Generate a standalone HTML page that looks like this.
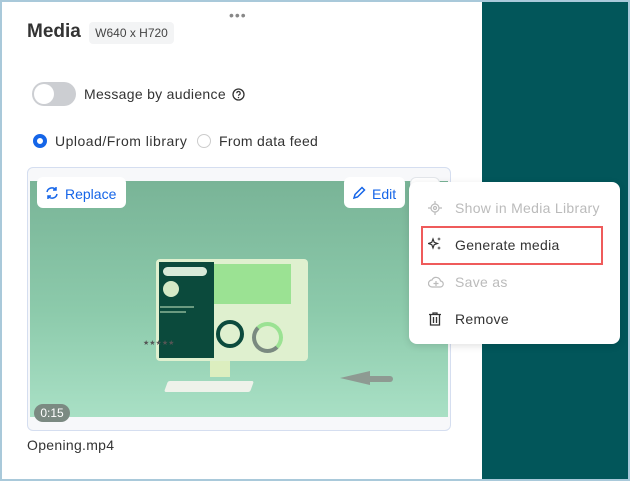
<!DOCTYPE html>
<html><head><meta charset="utf-8"><style>
*{box-sizing:border-box;margin:0;padding:0}
body{width:630px;height:481px;overflow:hidden;font-family:"Liberation Sans",sans-serif;background:#fff;position:relative}
.frame{position:absolute;inset:0;border:2px solid #a9c9da}
.teal{position:absolute;left:482px;top:2px;right:2px;bottom:2px;background:#02565a}
.abs{position:absolute}
.t{color:#333;font-size:14px;letter-spacing:.3px}
</style></head><body>
<div class="teal"></div>
<div class="abs" style="left:229px;top:10px;color:#888;font-size:14px;letter-spacing:1px;line-height:10px">•••</div>
<div class="abs" style="left:27px;top:21px;font-size:19px;font-weight:bold;color:#333">Media</div>
<div class="abs" style="left:89px;top:22px;width:85px;height:22px;background:#f3f4f5;border-radius:4px;font-size:12px;color:#444;line-height:22px;text-align:center">W640 x H720</div>
<div class="abs" style="left:32px;top:82px;width:44px;height:24px;border-radius:12px;background:#ccced2"></div>
<div class="abs" style="left:34px;top:84px;width:20px;height:20px;border-radius:50%;background:#fff"></div>
<div class="abs t" style="left:84px;top:86px">Message by audience</div>
<svg class="abs" style="left:232px;top:88px" width="13" height="13" viewBox="0 0 13 13"><circle cx="6.5" cy="6.5" r="5.5" fill="none" stroke="#333" stroke-width="1.3"/><path d="M4.8 5.2a1.7 1.7 0 1 1 2.4 1.5c-.5.3-.7.6-.7 1.1" fill="none" stroke="#333" stroke-width="1.2"/><circle cx="6.5" cy="9.6" r=".7" fill="#333"/></svg>
<div class="abs" style="left:33px;top:134px;width:14px;height:14px;border-radius:50%;border:4px solid #1565e8"></div>
<div class="abs t" style="left:55px;top:133px;letter-spacing:.5px">Upload/From library</div>
<div class="abs" style="left:197px;top:134px;width:14px;height:14px;border-radius:50%;border:1px solid #ccc"></div>
<div class="abs t" style="left:219px;top:133px">From data feed</div>
<div class="abs" style="left:27px;top:167px;width:424px;height:264px;border:1px solid #d5def0;border-radius:6px;background:#f7f8fa"></div>
<div class="abs" style="left:30px;top:181px;width:418px;height:236px;background:linear-gradient(180deg,#79b497 0%,#8ccaab 55%,#a9e0c5 100%);overflow:hidden">
 <div class="abs" style="left:126px;top:78px;width:152px;height:102px;background:#dff0cf;border-radius:4px"></div>
 <div class="abs" style="left:129px;top:81px;width:55px;height:96px;background:#0b4a3c"></div>
 <div class="abs" style="left:133px;top:86px;width:44px;height:9px;background:#d8ead9;border-radius:5px"></div>
 <div class="abs" style="left:133px;top:100px;width:16px;height:16px;background:#d5e9c6;border-radius:50%"></div>
 <div class="abs" style="left:130px;top:125px;width:34px;height:2px;background:#6a9a80"></div>
 <div class="abs" style="left:130px;top:130px;width:26px;height:2px;background:#6a9a80"></div>
 <div class="abs" style="left:184px;top:83px;width:77px;height:40px;background:#9be293"></div>
 <div class="abs" style="left:186px;top:139px;width:28px;height:28px;border-radius:50%;border:4px solid #0b4a3c"></div>
 <div class="abs" style="left:222px;top:141px;width:31px;height:31px;border-radius:50%;border:4px solid #7a8a80;border-top-color:#9be293;border-right-color:#9be293"></div>
 <div class="abs" style="left:180px;top:180px;width:20px;height:16px;background:#dceebf"></div>
 <div class="abs" style="left:136px;top:200px;width:86px;height:11px;background:#eef2ea;transform:skewX(-20deg);border-radius:2px"></div>
 <div class="abs" style="left:113px;top:160px;width:40px;height:6px;color:#555;font-size:7px;line-height:6px">★★★★★</div>
 <div class="abs" style="left:310px;top:190px;width:30px;height:14px;background:#8e9a92;clip-path:polygon(0 50%,100% 0,100% 100%)"></div>
 <div class="abs" style="left:335px;top:195px;width:28px;height:6px;background:#8e9a92;border-radius:3px"></div>
</div>
<div class="abs" style="left:34px;top:404px;width:36px;height:18px;border-radius:9px;background:#7b8a82;color:#fff;font-size:12px;line-height:18px;text-align:center">0:15</div>
<div class="abs" style="left:37px;top:177px;width:89px;height:31px;background:#fff;border-radius:6px"></div>
<svg class="abs" style="left:45px;top:186px" width="14" height="14" viewBox="0 0 14 14" fill="none" stroke="#1565e8" stroke-width="1.5"><path d="M2 6a5 5 0 0 1 9-2M12 8a5 5 0 0 1-9 2"/><path d="M11 1v3h-3M3 13v-3h3"/></svg>
<div class="abs" style="left:65px;top:186px;color:#1565e8;font-size:14px">Replace</div>
<div class="abs" style="left:344px;top:177px;width:61px;height:31px;background:#fff;border-radius:6px"></div>
<svg class="abs" style="left:352px;top:186px" width="14" height="14" viewBox="0 0 14 14" fill="none" stroke="#1565e8" stroke-width="1.5"><path d="M2 12l1-3.5L10 1.5l2.5 2.5L5.5 11z"/></svg>
<div class="abs" style="left:372px;top:186px;color:#1565e8;font-size:14px">Edit</div>
<div class="abs" style="left:410px;top:177px;width:30px;height:31px;background:#fff;border-radius:6px;border:1px solid #e3e6ea"></div>
<div class="abs" style="left:409px;top:182px;width:211px;height:162px;background:#fff;border-radius:8px;box-shadow:0 2px 8px rgba(0,0,0,.12)"></div>
<svg class="abs" style="left:428px;top:201px" width="14" height="14" viewBox="0 0 14 14" fill="none" stroke="#bbb" stroke-width="1.2"><circle cx="7" cy="7" r="4"/><circle cx="7" cy="7" r="1.5"/><path d="M7 0v3M7 11v3M0 7h3M11 7h3"/></svg>
<div class="abs" style="left:455px;top:200px;color:#bbb;font-size:14px;letter-spacing:.3px">Show in Media Library</div>
<div class="abs" style="left:421px;top:226px;width:182px;height:39px;border:2px solid #ef5b5b"></div>
<svg class="abs" style="left:428px;top:237px" width="14" height="14" viewBox="0 0 14 14" fill="#333"><path d="M5 2l1.2 3.3L9.5 6.5 6.2 7.7 5 11 3.8 7.7.5 6.5l3.3-1.2z" fill="none" stroke="#333" stroke-width="1.2"/><path d="M11 0l.5 1.5L13 2l-1.5.5L11 4l-.5-1.5L9 2l1.5-.5zM11 9l.5 1.5 1.5.5-1.5.5L11 13l-.5-1.5L9 11l1.5-.5z"/></svg>
<div class="abs t" style="left:455px;top:237px">Generate media</div>
<svg class="abs" style="left:428px;top:275px" width="16" height="14" viewBox="0 0 16 14" fill="none" stroke="#bbb" stroke-width="1.2"><path d="M4 12a3.5 3.5 0 0 1 0-7 4.5 4.5 0 0 1 8.5 1A3 3 0 0 1 12 12z"/><path d="M8 6v5M5.5 8.5h5"/></svg>
<div class="abs" style="left:455px;top:274px;color:#bbb;font-size:14px;letter-spacing:.3px">Save as</div>
<svg class="abs" style="left:429px;top:312px" width="12" height="14" viewBox="0 0 12 14" fill="none" stroke="#333" stroke-width="1.3"><path d="M0 2.5h12M4 2.5V1h4v1.5M1.5 2.5v10.5h9V2.5M4.5 5v6M7.5 5v6"/></svg>
<div class="abs t" style="left:455px;top:311px">Remove</div>
<div class="abs t" style="left:27px;top:437px">Opening.mp4</div>
<div class="frame"></div>
</body></html>
